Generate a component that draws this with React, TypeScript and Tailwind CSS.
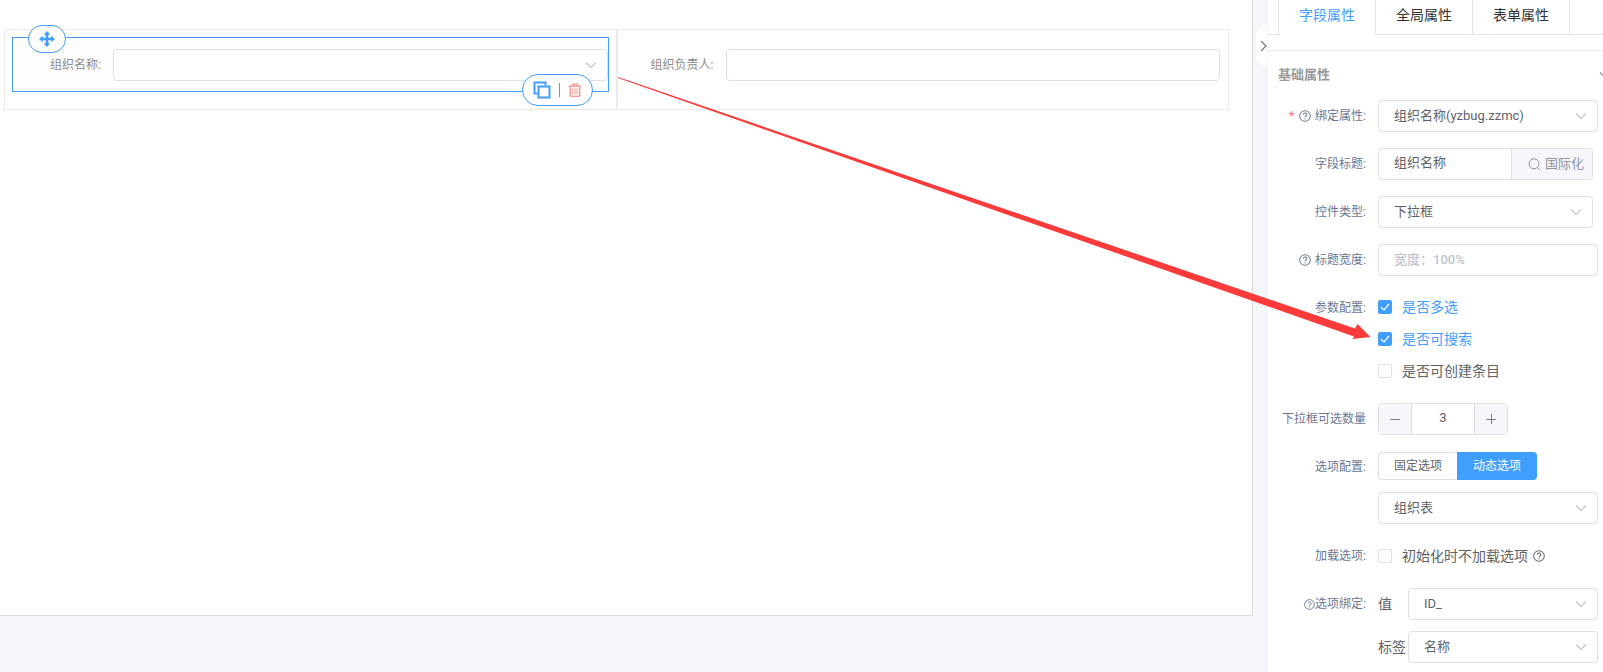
import { useId, useState } from "react"
import type { ReactNode } from "react"

function ChevronIcon({ className }: { className?: string }) {
  return (
    <svg viewBox="0 0 12 8" className={`h-2 w-3 fill-none stroke-current ${className ?? ""}`} aria-hidden="true">
      <path d="M1 1.5 6 6.5 11 1.5" strokeWidth="1.2" />
    </svg>
  )
}

function HelpIcon({ className }: { className?: string }) {
  return (
    <svg viewBox="0 0 14 14" className={`shrink-0 fill-none stroke-current ${className ?? "size-3"}`} aria-hidden="true">
      <circle cx="7" cy="7" r="6.2" strokeWidth="1.2" />
      <path d="M5 5.6a2 2 0 1 1 3 1.7c-.7.4-1 .6-1 1.3" strokeWidth="1.2" />
      <path d="M7 9.6v1.2" strokeWidth="1.3" />
    </svg>
  )
}

function MoveIcon() {
  return (
    <svg viewBox="0 0 16 16" className="size-4 fill-current" aria-hidden="true">
      <path d="M8 0 11.300 3.800H9.300V6.700H12.200V4.700L16 8l-3.800 3.300V9.300H9.300v2.900h2L8 16l-3.300-3.800h2V9.300H3.800v2L0 8l3.800-3.300v2h2.900V3.800h-2z" />
    </svg>
  )
}

function CopyIcon() {
  return (
    <svg viewBox="0 0 18 18" className="size-[18px] fill-none stroke-[#409eff]" aria-hidden="true">
      <path d="M4.500 12.500H1.500v-11h11v3" strokeWidth="2" />
      <rect x="5.500" y="5.500" width="11" height="11" strokeWidth="2" />
    </svg>
  )
}

function TrashIcon() {
  return (
    <svg viewBox="0 0 14 14" className="size-[14px] fill-none stroke-current" aria-hidden="true">
      <path d="M.8 3.200h12.400" strokeWidth="1.600" />
      <path d="M4.500 3V1.200h5V3" strokeWidth="1.400" />
      <path d="M2.300 3.500v8.800q0 .9.900.9h7.600q.9 0 .9-.9V3.500" strokeWidth="1.600" />
      <path d="M4.900 5.300v6M7 5.300v6M9.100 5.300v6" strokeWidth="1.100" />
    </svg>
  )
}

interface SelectBoxProps {
  id?: string
  label?: string
  options: string[]
  className?: string
}

function SelectBox({ id, label, options, className }: SelectBoxProps) {
  return (
    <div className={`relative ${className ?? ""}`}>
      <select
        id={id}
        aria-label={label}
        className="block h-8 w-full appearance-none rounded border border-[#dcdfe6] bg-white pr-8 pl-[15px] text-[13px] text-[#606266] outline-none"
      >
        {options.map((option) => (
          <option key={option}>{option}</option>
        ))}
      </select>
      <ChevronIcon className="pointer-events-none absolute top-3 right-[11px] text-[#c0c4cc]" />
    </div>
  )
}

interface CheckItemProps {
  text: string
  defaultChecked?: boolean
  help?: boolean
}

function CheckItem({ text, defaultChecked = false, help = false }: CheckItemProps) {
  const [checked, setChecked] = useState(defaultChecked)

  return (
    <label className={`flex h-8 items-center text-sm ${checked ? "text-[#409eff]" : "text-[#606266]"}`}>
      <span className="relative mr-[10px] size-[14px]">
        <input
          type="checkbox"
          checked={checked}
          onChange={(e) => setChecked(e.target.checked)}
          className="block size-[14px] appearance-none rounded-xs border border-[#dcdfe6] bg-white checked:border-[#409eff] checked:bg-[#409eff]"
        />
        {checked && (
          <svg viewBox="0 0 14 14" className="pointer-events-none absolute inset-0 fill-none stroke-white" aria-hidden="true">
            <path d="M3 7.200 6 10 11 4" strokeWidth="1.200" />
          </svg>
        )}
      </span>
      {text}
      {help && <HelpIcon className="ml-[5px] size-3" />}
    </label>
  )
}

interface FormRowProps {
  label: string
  htmlFor?: string
  required?: boolean
  icon?: ReactNode
  children: ReactNode
}

function FormRow({ label, htmlFor, required, icon, children }: FormRowProps) {
  return (
    <div className="mb-4 flex">
      <div className="flex h-8 w-[98px] shrink-0 items-center justify-end pr-3 text-xs text-[#6b7794]">
        {required && <span className="mr-[5px] text-[#f56c6c]">*</span>}
        {icon}
        <label htmlFor={htmlFor}>{label}</label>
      </div>
      <div className="min-w-0 flex-1">{children}</div>
    </div>
  )
}

function DesignCanvas() {
  return (
    <section className="h-[616px] border-r border-b border-[#dcdcdc] bg-white pt-[29px] pr-[23px] pl-1">
      <div className="flex h-[81px] border border-[#ebebeb] text-xs text-[#8c8c8c]">
        <div className="w-1/2 border-r border-[#ebebeb] p-[7px]">
          <div className="relative flex h-[55px] items-center border border-[#409eff] bg-[#fdfdfd]">
            <label htmlFor="org-name" className="w-[100px] shrink-0 pr-3 text-right">
              组织名称:
            </label>
            <SelectBox id="org-name" options={[""]} className="flex-1" />
            <button
              type="button"
              aria-label="移动"
              className="absolute -top-[13px] left-[15px] flex h-7 w-[38px] items-center justify-center rounded-full border border-[#409eff] bg-white text-[#409eff]"
            >
              <MoveIcon />
            </button>
            <div className="absolute right-[15px] -bottom-[15px] flex h-8 w-[71px] items-center justify-center gap-2 rounded-full border border-[#409eff] bg-white">
              <button type="button" aria-label="复制">
                <CopyIcon />
              </button>
              <span className="h-[14px] w-px bg-[#409eff]" />
              <button type="button" aria-label="删除" className="text-[#f3a09c]">
                <TrashIcon />
              </button>
            </div>
          </div>
        </div>
        <div className="flex w-1/2 items-start border-l border-[#ebebeb] pt-[19px] pr-2">
          <label htmlFor="org-owner" className="w-[108px] shrink-0 pr-3 text-right leading-8">
            组织负责人:
          </label>
          <input id="org-owner" className="h-8 min-w-0 flex-1 rounded border border-[#dcdfe6] bg-white px-[15px] text-[13px] outline-none" />
        </div>
      </div>
    </section>
  )
}

const tabs = ["字段属性", "全局属性", "表单属性"]

function PropertyTabs() {
  const [active, setActive] = useState(tabs[0])

  return (
    <div className="flex h-[35px]">
      <span className="w-[11px] border-r border-b border-[#dfe4ed]" />
      {tabs.map((tab) => (
        <button
          key={tab}
          type="button"
          onClick={() => setActive(tab)}
          className={`w-[97px] border-r border-b border-r-[#dfe4ed] pb-1 text-sm ${
            tab === active ? "border-b-white text-[#409eff]" : "border-b-[#dfe4ed] text-[#303133]"
          }`}
        >
          {tab}
        </button>
      ))}
      <span className="flex-1 border-b border-[#dfe4ed]" />
    </div>
  )
}

function NumberStepper({ id }: { id: string }) {
  const [value, setValue] = useState(3)

  return (
    <div className="flex h-8 w-[130px] overflow-hidden rounded border border-[#dcdfe6] text-[#606266]">
      <button
        type="button"
        aria-label="减少"
        onClick={() => setValue(value - 1)}
        className="flex w-8 items-center justify-center bg-[#f5f7fa]"
      >
        <svg viewBox="0 0 10 10" className="size-[10px] stroke-current" aria-hidden="true">
          <path d="M0 5.500h10" strokeWidth="0.800" />
        </svg>
      </button>
      <input
        id={id}
        value={value}
        onChange={(e) => setValue(Number(e.target.value) || 0)}
        className="min-w-0 flex-1 border-x border-[#dcdfe6] pb-0.5 text-center text-[13px] outline-none"
      />
      <button
        type="button"
        aria-label="增加"
        onClick={() => setValue(value + 1)}
        className="flex w-8 items-center justify-center bg-[#f5f7fa]"
      >
        <svg viewBox="0 0 10 10" className="size-[10px] stroke-current" aria-hidden="true">
          <path d="M0 5.500h10M5.500 0v10" strokeWidth="0.800" />
        </svg>
      </button>
    </div>
  )
}

function PropertyPanel() {
  const id = useId()

  return (
    <aside className="w-[335px] shrink-0 overflow-hidden bg-white">
      <PropertyTabs />
      <div className="mt-[15px] border-t border-[#e8ecf5] pl-[10px]">
        <div className="flex h-[49px] items-center justify-between pb-0.5">
          <h2 className="text-[13px] font-bold text-[#999]">基础属性</h2>
          <ChevronIcon className="-mr-2 text-[#909399]" />
        </div>
        <form className="pr-[5px] pl-0.5">
          <FormRow label="绑定属性:" htmlFor={`${id}-bind`} required icon={<HelpIcon className="mr-1 size-3" />}>
            <SelectBox id={`${id}-bind`} options={["组织名称(yzbug.zzmc)"]} />
          </FormRow>
          <FormRow label="字段标题:" htmlFor={`${id}-title`}>
            <div className="mr-[5px] flex h-8 overflow-hidden rounded border border-[#dcdfe6]">
              <input
                id={`${id}-title`}
                defaultValue="组织名称"
                className="min-w-0 flex-1 pr-2 pb-0.5 pl-[15px] text-[13px] text-[#606266] outline-none"
              />
              <button
                type="button"
                className="flex w-[81px] items-center justify-center gap-[5px] border-l border-[#dcdfe6] bg-[#f5f7fa] pl-2 text-[13px] text-[#909399]"
              >
                <svg viewBox="0 0 12 12" className="size-3 fill-none stroke-current" aria-hidden="true">
                  <circle cx="6" cy="5.800" r="5" />
                  <path d="M9.500 9.500 11.500 11.500" />
                </svg>
                国际化
              </button>
            </div>
          </FormRow>
          <FormRow label="控件类型:" htmlFor={`${id}-type`}>
            <SelectBox id={`${id}-type`} options={["下拉框"]} className="mr-[5px]" />
          </FormRow>
          <FormRow label="标题宽度:" htmlFor={`${id}-width`} icon={<HelpIcon className="mr-1 size-3" />}>
            <input
              id={`${id}-width`}
              placeholder="宽度：100%"
              className="block h-8 w-full rounded border border-[#dcdfe6] px-[15px] pb-0.5 text-[13px] outline-none placeholder:font-medium placeholder:text-[#c0c4cc]"
            />
          </FormRow>
          <FormRow label="参数配置:">
            <div className="-mt-px">
              <CheckItem text="是否多选" defaultChecked />
              <CheckItem text="是否可搜索" defaultChecked />
              <CheckItem text="是否可创建条目" />
            </div>
          </FormRow>
          <FormRow label="下拉框可选数量" htmlFor={`${id}-count`}>
            <NumberStepper id={`${id}-count`} />
          </FormRow>
          <FormRow label="选项配置:">
            <div className="mb-3 flex pt-px text-xs">
              <button type="button" className="h-7 w-[79px] rounded-l border border-r-0 border-[#dcdfe6] text-[#606266]">
                固定选项
              </button>
              <button type="button" className="h-7 w-20 rounded-r bg-[#409eff] text-white">
                动态选项
              </button>
            </div>
            <SelectBox label="选项配置" options={["组织表"]} />
          </FormRow>
          <FormRow label="加载选项:">
            <CheckItem text="初始化时不加载选项" help />
          </FormRow>
          <FormRow label="选项绑定:" icon={<HelpIcon className="size-[11px]" />}>
            <div className="mb-[11px] flex items-center text-sm text-[#606266]">
              <label htmlFor={`${id}-value`} className="w-[30px] shrink-0">
                值
              </label>
              <SelectBox id={`${id}-value`} options={["ID_"]} className="flex-1" />
            </div>
            <div className="flex items-center text-sm text-[#606266]">
              <label htmlFor={`${id}-label`} className="w-[30px] shrink-0">
                标签
              </label>
              <SelectBox id={`${id}-label`} options={["名称"]} className="flex-1" />
            </div>
          </FormRow>
        </form>
      </div>
    </aside>
  )
}

export default function App() {
  return (
    <div className="relative flex h-screen overflow-hidden bg-[#f5f7fb] font-[Roboto,'Noto_Sans_CJK_SC',sans-serif]">
      <main className="min-w-0 flex-1">
        <DesignCanvas />
      </main>
      <div className="w-[15px] shrink-0 border-r-4 border-[#f3f4f9] pt-6">
        <button type="button" aria-label="收起" className="ml-[3px] block h-11 w-3">
          <svg viewBox="0 0 12 44" className="h-11 w-3" aria-hidden="true">
            <path d="M0 8 11 0v44L0 36z" fill="#fff" />
            <path d="M5 17 10 22 5 27" fill="none" stroke="#777" strokeWidth="1.200" />
          </svg>
        </button>
      </div>
      <PropertyPanel />
      <svg viewBox="0 0 753 263" className="pointer-events-none absolute top-[77px] right-[232px] h-[263px] w-[753px]" aria-hidden="true">
        <path d="M0 0 737 251.500 739.500 247 752.500 260 734.500 262 736 259.500 0 1z" fill="#fb3b3a" />
      </svg>
    </div>
  )
}
